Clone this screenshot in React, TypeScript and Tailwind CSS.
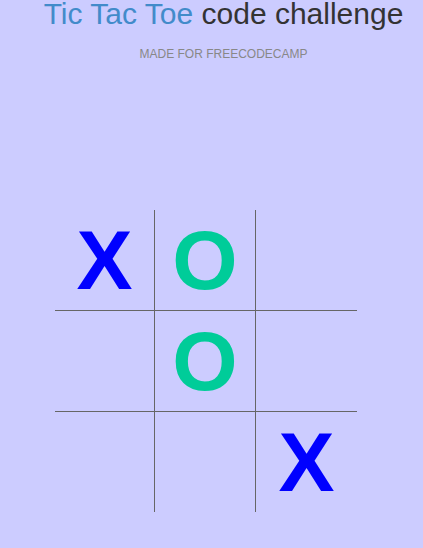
import React from "react";

const board = ["X", "O", "", "", "O", "", "", "", "X"];

export default function App() {
  return (
    <div className="min-h-[548px] w-full bg-[#ccccff] font-['Liberation_Sans',Arial,sans-serif] pt-px">
      <div className="pl-[24px] text-center">
        <h1 className="m-0 -mt-[2px] text-[30px] leading-[30px] font-normal">
          <span className="text-[#428bca]">Tic Tac Toe</span>{" "}
          <span className="text-[#333333]">code challenge</span>
        </h1>
        <p className="mt-[18px] text-[12px] leading-[14px] text-[#888888]">MADE FOR FREECODECAMP</p>
      </div>
      <div className="ml-[55px] mt-[149px] grid w-[302px] grid-cols-[99px_101px_102px] grid-rows-[100px_101px_101px]">
        {board.map((v, i) => {
          const col = i % 3;
          const row = Math.floor(i / 3);
          return (
            <div
              key={i}
              className={
                "flex items-center justify-center text-[84px] font-bold leading-none border-[#666666] " +
                (col > 0 ? "border-l " : "") +
                (row > 0 ? "border-t " : "") +
                (v === "X" ? "text-[#0000ff]" : "text-[#00cc99]")
              }
            >
              {v}
            </div>
          );
        })}
      </div>
    </div>
  );
}
